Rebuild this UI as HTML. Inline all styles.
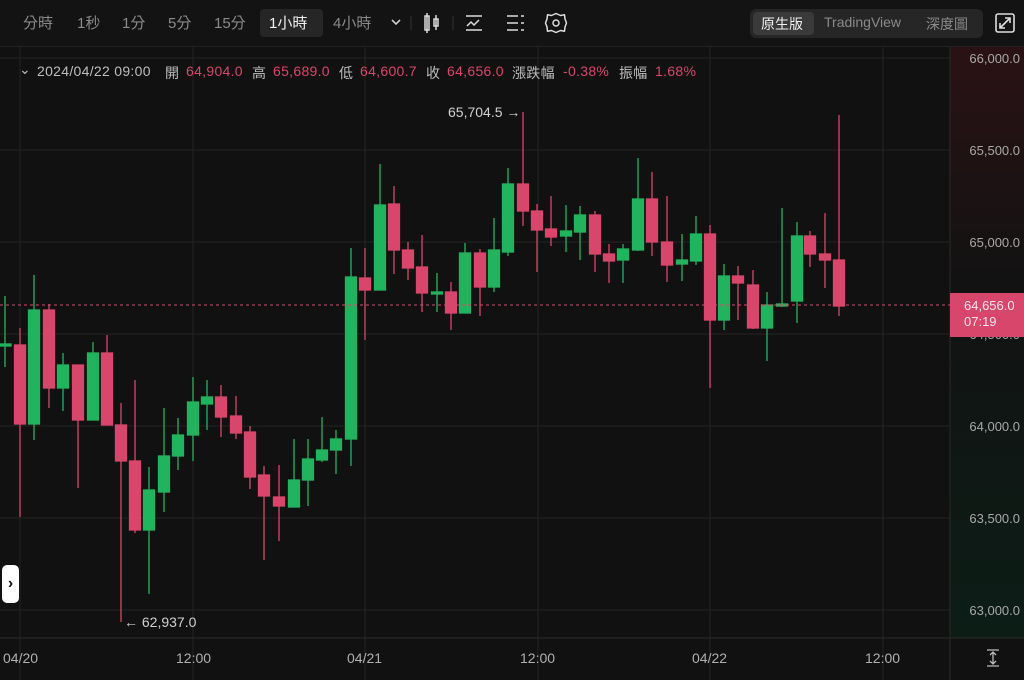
<!DOCTYPE html>
<html><head><meta charset="utf-8"><style>
body{margin:0;width:1024px;height:680px;background:#111111;overflow:hidden;font-family:"Liberation Sans","Noto Sans CJK TC",sans-serif;position:relative}
.tb{position:absolute;left:0;top:0;width:1024px;height:46px;background:#131313;border-bottom:1px solid #222}
.t{position:absolute;top:12px;font-size:15px;color:#8a8a8a}
.act{position:absolute;left:260px;top:9px;width:63px;height:28px;background:#262626;border-radius:4px}
.seg{position:absolute;left:750px;top:9px;width:233px;height:29px;background:#262626;border-radius:6px}
.segact{position:absolute;left:753px;top:12px;width:61px;height:23px;background:#3a3a3a;border-radius:4px}
.o{position:absolute;top:63px;font-size:14px;color:#bdbdbd;white-space:nowrap;letter-spacing:0.3px}
.o.r{color:#d9466b}
.pl{position:absolute;right:4px;font-size:13px;color:#a8a8a8}
.tl{position:absolute;top:650px;font-size:14px;color:#b0b0b0}
</style></head><body>
<div class="tb">
<div class="act"></div>
<span class="t" style="left:23px">分時</span>
<span class="t" style="left:77px">1秒</span>
<span class="t" style="left:122px">1分</span>
<span class="t" style="left:168px">5分</span>
<span class="t" style="left:214px">15分</span>
<span class="t" style="left:269px;color:#f0f0f0">1小時</span>
<span class="t" style="left:333px">4小時</span>
<svg style="position:absolute;left:0;top:0" width="600" height="46">
<path d="M392 20l4 4 4-4" stroke="#ccc" stroke-width="1.6" fill="none"/>
<line x1="411" y1="16" x2="411" y2="30" stroke="#333"/>
<line x1="453" y1="16" x2="453" y2="30" stroke="#333"/>
<rect x="425" y="16" width="4" height="14" stroke="#ddd" stroke-width="1.5" fill="none"/><line x1="427" y1="13" x2="427" y2="33" stroke="#ddd" stroke-width="1.5"/>
<rect x="434" y="19" width="4" height="7" stroke="#ddd" stroke-width="1.5" fill="none"/><line x1="436" y1="15" x2="436" y2="30" stroke="#ddd" stroke-width="1.5"/>
<line x1="466" y1="16" x2="482" y2="16" stroke="#ddd" stroke-width="1.5"/><line x1="466" y1="30" x2="482" y2="30" stroke="#ddd" stroke-width="1.5"/>
<path d="M467 26l4-4 3 3 5-5" stroke="#ddd" stroke-width="1.5" fill="none"/>
<line x1="507" y1="16" x2="518" y2="16" stroke="#ddd" stroke-width="1.5"/><line x1="507" y1="23" x2="518" y2="23" stroke="#ddd" stroke-width="1.5"/><line x1="507" y1="30" x2="518" y2="30" stroke="#ddd" stroke-width="1.5"/>
<line x1="521" y1="16" x2="524" y2="16" stroke="#ddd" stroke-width="1.5"/><line x1="521" y1="23" x2="524" y2="23" stroke="#ddd" stroke-width="1.5"/><line x1="521" y1="30" x2="524" y2="30" stroke="#ddd" stroke-width="1.5"/>
<circle cx="556" cy="23" r="3" stroke="#ddd" stroke-width="1.5" fill="none"/>
<path d="M556 13.5 L560.5 15.5 L564.5 14.8 L565 19 L566.5 23 L565 27 L564.5 31.2 L560.5 30.5 L556 32.5 L551.5 30.5 L547.5 31.2 L547 27 L545.5 23 L547 19 L547.5 14.8 L551.5 15.5 Z" stroke="#ddd" stroke-width="1.5" fill="none" stroke-linejoin="round"/>
</svg>
<div class="seg"></div><div class="segact"></div>
<span class="t" style="left:761px;color:#f0f0f0;font-size:14px;top:14px">原生版</span>
<span class="t" style="left:824px;font-size:14px;top:14px">TradingView</span>
<span class="t" style="left:926px;font-size:14px;top:14px">深度圖</span>
<svg style="position:absolute;left:995px;top:13px" width="20" height="20"><rect x="1" y="1" width="18" height="18" rx="2" stroke="#ddd" stroke-width="1.6" fill="none"/><path d="M5 15l10-10M10 5h5v5M5 10v5h5" stroke="#ddd" stroke-width="1.6" fill="none"/></svg>
</div>
<svg style="position:absolute;left:0;top:47px" width="1024" height="633">
<defs><linearGradient id="g" x1="0" y1="0" x2="0" y2="1"><stop offset="0" stop-color="#2a1214"/><stop offset="0.4" stop-color="#121212"/><stop offset="1" stop-color="#0c1d16"/></linearGradient></defs>
<rect x="950" y="0" width="74" height="591" fill="url(#g)"/>
<g stroke="#222" stroke-width="1">
<line x1="0" y1="11" x2="950" y2="11"/><line x1="0" y1="103" x2="950" y2="103"/><line x1="0" y1="195" x2="950" y2="195"/><line x1="0" y1="287" x2="950" y2="287"/><line x1="0" y1="379" x2="950" y2="379"/><line x1="0" y1="471" x2="950" y2="471"/><line x1="0" y1="563" x2="950" y2="563"/>
<line x1="20" y1="0" x2="20" y2="633"/><line x1="193" y1="0" x2="193" y2="633"/><line x1="365" y1="0" x2="365" y2="633"/><line x1="538" y1="0" x2="538" y2="633"/><line x1="710" y1="0" x2="710" y2="633"/><line x1="883" y1="0" x2="883" y2="633"/>
<line x1="950" y1="0" x2="950" y2="633" stroke="#2a2a2a"/>
<line x1="0" y1="591" x2="1024" y2="591" stroke="#2a2a2a"/>
</g>
</svg>
<span class="pl" style="top:327px">64,500.0</span>
<svg style="position:absolute;left:0;top:0" width="950" height="640">
<g stroke-width="1.3">
<g stroke="#22b35e" fill="#22b35e">
<line x1="5" y1="296" x2="5" y2="367"/><rect x="0" y="344" width="11" height="2"/>
<line x1="34" y1="275" x2="34" y2="440"/><rect x="28.5" y="310" width="11" height="114"/>
<line x1="63" y1="353" x2="63" y2="411"/><rect x="57.5" y="365" width="11" height="23"/>
<line x1="93" y1="342" x2="93" y2="420"/><rect x="87.5" y="353" width="11" height="67"/>
<line x1="149" y1="467" x2="149" y2="594"/><rect x="143.5" y="490" width="11" height="40"/>
<line x1="164" y1="408" x2="164" y2="512"/><rect x="158.5" y="456" width="11" height="36"/>
<line x1="178" y1="418" x2="178" y2="470"/><rect x="172.5" y="435" width="11" height="21"/>
<line x1="193" y1="377" x2="193" y2="461"/><rect x="187.5" y="402" width="11" height="33"/>
<line x1="207" y1="380" x2="207" y2="430"/><rect x="201.5" y="397" width="11" height="7"/>
<line x1="294" y1="439" x2="294" y2="507"/><rect x="288.5" y="480" width="11" height="27"/>
<line x1="308" y1="439" x2="308" y2="506"/><rect x="302.5" y="459" width="11" height="21"/>
<line x1="322" y1="417" x2="322" y2="462"/><rect x="316.5" y="450" width="11" height="10"/>
<line x1="336" y1="430" x2="336" y2="474"/><rect x="330.5" y="439" width="11" height="11"/>
<line x1="351" y1="248" x2="351" y2="466"/><rect x="345.5" y="277" width="11" height="162"/>
<line x1="380" y1="164" x2="380" y2="290"/><rect x="374.5" y="205" width="11" height="85"/>
<line x1="437" y1="273" x2="437" y2="312"/><rect x="431.5" y="292" width="11" height="2"/>
<line x1="465" y1="243" x2="465" y2="313"/><rect x="459.5" y="253" width="11" height="60"/>
<line x1="494" y1="218" x2="494" y2="292"/><rect x="488.5" y="250" width="11" height="37"/>
<line x1="508" y1="168" x2="508" y2="256"/><rect x="502.5" y="184" width="11" height="68"/>
<line x1="566" y1="205" x2="566" y2="252"/><rect x="560.5" y="231" width="11" height="5"/>
<line x1="580" y1="206" x2="580" y2="260"/><rect x="574.5" y="215" width="11" height="17"/>
<line x1="623" y1="244" x2="623" y2="283"/><rect x="617.5" y="249" width="11" height="11"/>
<line x1="638" y1="158" x2="638" y2="251"/><rect x="632.5" y="199" width="11" height="51"/>
<line x1="682" y1="234" x2="682" y2="281"/><rect x="676.5" y="260" width="11" height="4"/>
<line x1="696" y1="216" x2="696" y2="265"/><rect x="690.5" y="234" width="11" height="27"/>
<line x1="724" y1="264" x2="724" y2="330"/><rect x="718.5" y="276" width="11" height="44"/>
<line x1="767" y1="292" x2="767" y2="361"/><rect x="761.5" y="305" width="11" height="23"/>
<line x1="782" y1="208" x2="782" y2="307"/><rect x="776.5" y="304" width="11" height="2"/>
<line x1="797" y1="222" x2="797" y2="323"/><rect x="791.5" y="236" width="11" height="65"/>
</g>
<g stroke="#d9466b" fill="#d9466b">
<line x1="20" y1="328" x2="20" y2="517"/><rect x="14.5" y="345" width="11" height="79"/>
<line x1="49" y1="304" x2="49" y2="408"/><rect x="43.5" y="310" width="11" height="78"/>
<line x1="78" y1="365" x2="78" y2="488"/><rect x="72.5" y="365" width="11" height="55"/>
<line x1="107" y1="335" x2="107" y2="425"/><rect x="101.5" y="353" width="11" height="72"/>
<line x1="121" y1="403" x2="121" y2="622"/><rect x="115.5" y="425" width="11" height="36"/>
<line x1="135" y1="380" x2="135" y2="533"/><rect x="129.5" y="461" width="11" height="69"/>
<line x1="221" y1="385" x2="221" y2="437"/><rect x="215.5" y="397" width="11" height="20"/>
<line x1="236" y1="396" x2="236" y2="439"/><rect x="230.5" y="416" width="11" height="17"/>
<line x1="250" y1="426" x2="250" y2="489"/><rect x="244.5" y="432" width="11" height="45"/>
<line x1="264" y1="466" x2="264" y2="560"/><rect x="258.5" y="475" width="11" height="21"/>
<line x1="279" y1="465" x2="279" y2="541"/><rect x="273.5" y="497" width="11" height="9"/>
<line x1="365" y1="248" x2="365" y2="340"/><rect x="359.5" y="278" width="11" height="12"/>
<line x1="394" y1="186" x2="394" y2="274"/><rect x="388.5" y="204" width="11" height="46"/>
<line x1="408" y1="242" x2="408" y2="280"/><rect x="402.5" y="250" width="11" height="18"/>
<line x1="422" y1="235" x2="422" y2="312"/><rect x="416.5" y="267" width="11" height="26"/>
<line x1="451" y1="282" x2="451" y2="330"/><rect x="445.5" y="292" width="11" height="21"/>
<line x1="480" y1="249" x2="480" y2="316"/><rect x="474.5" y="253" width="11" height="34"/>
<line x1="523" y1="112" x2="523" y2="226"/><rect x="517.5" y="184" width="11" height="27"/>
<line x1="537" y1="204" x2="537" y2="272"/><rect x="531.5" y="211" width="11" height="19"/>
<line x1="551" y1="196" x2="551" y2="246"/><rect x="545.5" y="229" width="11" height="8"/>
<line x1="595" y1="211" x2="595" y2="272"/><rect x="589.5" y="215" width="11" height="39"/>
<line x1="609" y1="244" x2="609" y2="283"/><rect x="603.5" y="254" width="11" height="7"/>
<line x1="652" y1="172" x2="652" y2="256"/><rect x="646.5" y="199" width="11" height="43"/>
<line x1="667" y1="196" x2="667" y2="282"/><rect x="661.5" y="242" width="11" height="23"/>
<line x1="710" y1="225" x2="710" y2="388"/><rect x="704.5" y="234" width="11" height="86"/>
<line x1="738" y1="266" x2="738" y2="320"/><rect x="732.5" y="276" width="11" height="7"/>
<line x1="753" y1="270" x2="753" y2="329"/><rect x="747.5" y="285" width="11" height="43"/>
<line x1="810" y1="231" x2="810" y2="267"/><rect x="804.5" y="236" width="11" height="18"/>
<line x1="825" y1="213" x2="825" y2="288"/><rect x="819.5" y="254" width="11" height="6"/>
<line x1="839" y1="115" x2="839" y2="316"/><rect x="833.5" y="260" width="11" height="46"/>
</g>
</g>
<line x1="0" y1="305" x2="950" y2="305" stroke="#d9466b" stroke-width="1" stroke-dasharray="3 3"/>
<text x="448" y="117" fill="#d0d0d0" font-size="14" font-family="Liberation Sans">65,704.5 →</text>
<text x="124" y="627" fill="#d0d0d0" font-size="14" font-family="Liberation Sans">← 62,937.0</text>
</svg>
<span class="o" style="left:19px;top:61px">⌄</span>
<span class="o" style="left:37px">2024/04/22 09:00</span>
<span class="o" style="left:165px">開</span><span class="o r" style="left:186px">64,904.0</span>
<span class="o" style="left:252px">高</span><span class="o r" style="left:273px">65,689.0</span>
<span class="o" style="left:339px">低</span><span class="o r" style="left:360px">64,600.7</span>
<span class="o" style="left:426px">收</span><span class="o r" style="left:447px">64,656.0</span>
<span class="o" style="left:512px">漲跌幅</span><span class="o r" style="left:563px">-0.38%</span>
<span class="o" style="left:619px">振幅</span><span class="o r" style="left:655px">1.68%</span>
<div style="position:absolute;left:2px;top:565px;width:17px;height:38px;background:#fff;border-radius:5px;color:#111;font-size:16px;font-weight:bold;text-align:center;line-height:38px">›</div>
<span class="pl" style="top:51px">66,000.0</span>
<span class="pl" style="top:143px">65,500.0</span>
<span class="pl" style="top:235px">65,000.0</span>
<span class="pl" style="top:419px">64,000.0</span>
<span class="pl" style="top:511px">63,500.0</span>
<span class="pl" style="top:603px">63,000.0</span>
<div style="position:absolute;left:950px;top:293px;width:74px;height:44px;background:#d9466b;color:#fbe3ea;font-size:13px;line-height:16px;padding:5px 0 0 14px;box-sizing:border-box">64,656.0<br>07:19</div>
<span class="tl" style="left:3px">04/20</span>
<span class="tl" style="left:176px">12:00</span>
<span class="tl" style="left:347px">04/21</span>
<span class="tl" style="left:520px">12:00</span>
<span class="tl" style="left:692px">04/22</span>
<span class="tl" style="left:865px">12:00</span>
<svg style="position:absolute;left:985px;top:649px" width="16" height="18"><path d="M2 1h12M2 17h12M8 3v12M5 6l3-3 3 3M5 12l3 3 3-3" stroke="#bbb" stroke-width="1.3" fill="none"/></svg>
</body></html>
